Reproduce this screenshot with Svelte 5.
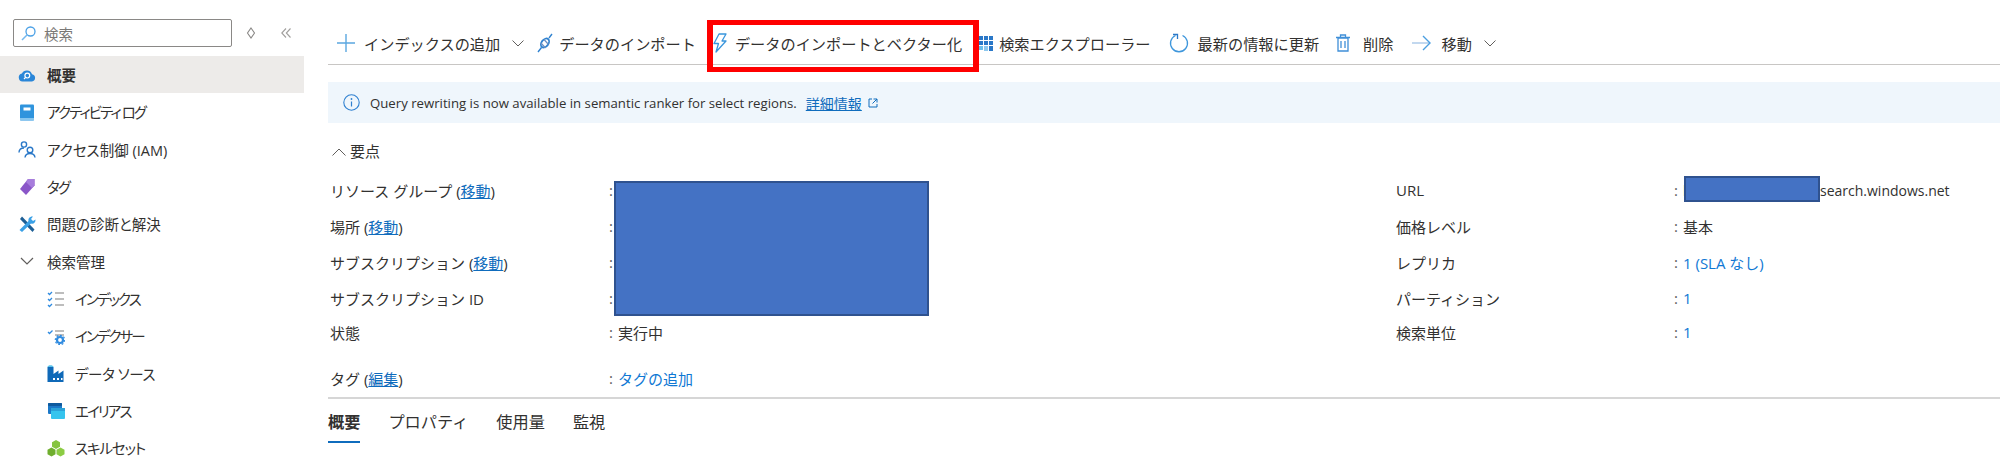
<script>
  const navItems = [
    { label: '概要', icon: 'cloud', active: true },
    { label: 'アクティビティ ログ', icon: 'book', track: 't3' },
    { label: 'アクセス制御 (IAM)', icon: 'people' },
    { label: 'タグ', icon: 'tag', track: 't3' },
    { label: '問題の診断と解決', icon: 'wrench' },
    { label: '検索管理', icon: 'chevron' },
    { label: 'インデックス', icon: 'list', sub: true, track: 't3' },
    { label: 'インデクサー', icon: 'indexer', sub: true, track: 't3' },
    { label: 'データ ソース', icon: 'factory', sub: true, track: 't1' },
    { label: 'エイリアス', icon: 'alias', sub: true, track: 't3' },
    { label: 'スキルセット', icon: 'cubes', sub: true, track: 't2' }
  ];

  const tools = [
    { label: 'インデックスの追加', icon: 'plus', menu: true },
    { label: 'データのインポート', icon: 'plug' },
    { label: 'データのインポートとベクター化', icon: 'bolt' },
    { label: '検索エクスプローラー', icon: 'grid' },
    { label: '最新の情報に更新', icon: 'refresh' },
    { label: '削除', icon: 'trash' },
    { label: '移動', icon: 'arrow', menu: true }
  ];

  const leftRows = [
    { label: 'リソース グループ', action: '移動' },
    { label: '場所', action: '移動' },
    { label: 'サブスクリプション', action: '移動' },
    { label: 'サブスクリプション ID' },
    { label: '状態', value: '実行中', short: true },
    { label: 'タグ', action: '編集', value: 'タグの追加', link: true, spaced: true }
  ];

  const rightRows = [
    { label: 'URL', value: 'search.windows.net', hidden: 'https://service-name.' },
    { label: '価格レベル', value: '基本' },
    { label: 'レプリカ', value: '1 (SLA なし)', link: true },
    { label: 'パーティション', value: '1', link: true },
    { label: '検索単位', value: '1', link: true, short: true }
  ];

  const tabs = ['概要', 'プロパティ', '使用量', '監視'];
</script>

{#snippet navIcon(name)}
  <svg class="nav-icon" viewBox="0 0 18 18" aria-hidden="true">
    {#if name === 'cloud'}
      <path d="M4.5 15.5a4 4 0 0 1-.6-7.9A5.4 5.4 0 0 1 14 8.2a3.7 3.7 0 0 1 0 7.3z" fill="#2a86d8" />
      <circle cx="9.3" cy="9.6" r="2.4" fill="none" stroke="#fff" stroke-width="1.2" />
      <path d="M7.6 11.4 6 13" stroke="#fff" stroke-width="1.2" />
    {:else if name === 'book'}
      <rect x="2" y="1.5" width="14" height="16" rx="1" fill="#2f94dd" />
      <rect x="2" y="15" width="14" height="2.5" fill="#86c6ef" />
      <rect x="5.5" y="4.5" width="7" height="3" fill="#fff" />
    {:else if name === 'people'}
      <g fill="none" stroke="#2a78c8" stroke-width="1.4">
        <circle cx="6" cy="4.5" r="2.6" />
        <path d="M1 12.5c0-3 2-4.5 5-4.5" />
        <circle cx="12" cy="10" r="2.8" />
        <path d="M7 17.5c.3-2.6 2.2-4 5-4s4.700 1.400 5 4" />
      </g>
    {:else if name === 'tag'}
      <path d="M10 1h6.500v6.500L8 17 2 11z" fill="#8a56c8" />
      <path d="M10 1h6.500v6.500L14 10 8 4z" fill="#a77ddc" />
    {:else if name === 'wrench'}
      <path d="M2 4l2-2.500L16.500 14.500l-2 2.500z" fill="#1d5f96" />
      <path d="M1.500 15l9-9c-.6-2.500 1.500-5 4.500-4.500l-2 2.500 2 2 2.500-1.500c.3 3-2 4.800-4.500 4L4 17z" fill="#3aa0e6" />
    {:else if name === 'chevron'}
      <path d="M3 6l6 6 6-6" fill="none" stroke="#605e5c" stroke-width="1.200" />
    {:else if name === 'list'}
      <g fill="none" stroke="#2f8be0" stroke-width="1.300">
        <path d="M1 3l1.500 1.500L5 2M1 9l1.500 1.500L5 8M1 15l1.500 1.500L5 14" />
      </g>
      <path d="M8 3h9M8 9h9M8 15h9" stroke="#a8a8a8" stroke-width="1.400" />
    {:else if name === 'indexer'}
      <path d="M1 5l1.500 1.500L5.500 3.500" fill="none" stroke="#2f8be0" stroke-width="1.300" />
      <path d="M8 4h9M8 8h9" stroke="#a8a8a8" stroke-width="1.300" />
      <circle cx="13" cy="13" r="3" fill="none" stroke="#2f8be0" stroke-width="2.200" />
      <circle cx="13" cy="13" r="4.700" fill="none" stroke="#2f8be0" stroke-width="1.200" stroke-dasharray="1.800 1.800" />
    {:else if name === 'factory'}
      <path d="M0.500 18V3h6v7l5-3.500V10l5-3.500V18z" fill="#0f69b8" />
      <path d="M0.500 3c0-2.500 6-2.500 6 0z" fill="#5cc3ea" />
      <path d="M6 14h2v2H6zM10 14h2v2h-2zM14 14h1.500v2H14z" fill="#fff" />
    {:else if name === 'alias'}
      <rect x="1" y="1" width="14" height="11" rx="1" fill="#1b78c8" />
      <rect x="1" y="1" width="14" height="3" rx="1" fill="#0f5a9e" />
      <rect x="4" y="6" width="14" height="11" rx="1" fill="#36c4ee" />
      <rect x="4" y="6" width="14" height="3" fill="#2ba2d8" />
    {:else if name === 'cubes'}
      <path d="M9 1l4 2.200v4.500L9 10 5 7.700V3.200z" fill="#86c440" />
      <path d="M4.500 8.500l4 2.200v4.500l-4 2.300-4-2.300v-4.500z" fill="#6fae2e" />
      <path d="M13.500 8.500l4 2.200v4.500l-4 2.300-4-2.300v-4.500z" fill="#8ccc44" />
    {/if}
  </svg>
{/snippet}

{#snippet toolIcon(name)}
  {#if name === 'plus'}
    <svg class="ti plus" viewBox="0 0 18 18" aria-hidden="true"><path d="M9 0v18M0 9h18" stroke="#5ba7e0" stroke-width="1.400" /></svg>
  {:else if name === 'plug'}
    <svg class="ti plug" viewBox="0 0 16 20" aria-hidden="true">
      <path d="M1 19l3.500-4.500M15 1l-3 4" fill="none" stroke="#2f82d0" stroke-width="1.400" />
      <ellipse cx="8" cy="10" rx="3.400" ry="5" transform="rotate(38 8 10)" fill="none" stroke="#2f82d0" stroke-width="1.800" />
      <path d="M4 10l4.500 5M7 6.500l4.500 5" stroke="#6d8fc0" stroke-width="1.200" />
    </svg>
  {:else if name === 'bolt'}
    <svg class="ti bolt" viewBox="0 0 14 20" aria-hidden="true">
      <path d="M6 1h7L9 8h4L3 19l2.500-8.500H1z" fill="none" stroke="#3a96dc" stroke-width="1.300" stroke-linejoin="round" />
    </svg>
  {:else if name === 'grid'}
    <svg class="ti grid" viewBox="0 0 14 17" aria-hidden="true">
      <path d="M5 1h4v4H5zM10 1h4v4h-4zM5 6h4v4H5zM10 6h4v4h-4zM0 1h4v4H0zM0 6h4v4H0zM10 11h4v5h-4z" fill="#2a78c8" />
      <path d="M0 11h4v4H0z" fill="#6cc0ec" />
      <path d="M5 11h4v5H5z" fill="#8cc8ee" />
    </svg>
  {:else if name === 'refresh'}
    <svg class="ti refresh" viewBox="0 0 20 20" aria-hidden="true">
      <path d="M6.500 2.500a8.500 8.500 0 1 0 7 0" fill="none" stroke="#3f97dc" stroke-width="1.300" />
      <path d="M4 1.500h4.500V6" fill="none" stroke="#2a78c8" stroke-width="1.300" />
    </svg>
  {:else if name === 'trash'}
    <svg class="ti trash" viewBox="0 0 14 18" aria-hidden="true">
      <path d="M2 4h10v13H2zM0 3.500h14M4.500 3.500V1h5v2.500M5 7v7M9 7v7" fill="none" stroke="#3f8fd8" stroke-width="1.300" />
    </svg>
  {:else if name === 'arrow'}
    <svg class="ti arrow" viewBox="0 0 19 16" aria-hidden="true">
      <path d="M0 8h18" stroke="#a8c8e8" stroke-width="1.400" />
      <path d="M11 1l7 7-7 7" fill="none" stroke="#4a9ee0" stroke-width="1.400" />
    </svg>
  {/if}
{/snippet}

<div class="page">
  <aside class="sidebar">
    <div class="search-row">
      <div class="search-box">
        <svg class="search-icon" viewBox="0 0 15 15" aria-hidden="true">
          <circle cx="9.500" cy="5.500" r="4.500" fill="none" stroke="#4aa0e6" stroke-width="1.300" />
          <path d="M6.200 8.800 1 14" stroke="#74b8ee" stroke-width="1.500" />
        </svg>
        <span>検索</span>
      </div>
      <svg class="sort-icon" viewBox="0 0 10 12" aria-hidden="true">
        <path d="M5 1l3.500 5L5 11 1.500 6z" fill="none" stroke="#8a8886" stroke-width="1.100" />
      </svg>
      <svg class="collapse-icon" viewBox="0 0 10 10" aria-hidden="true">
        <path d="M5 .5.800 5 5 9.500M9.500.5 5.300 5l4.200 4.500" fill="none" stroke="#a19f9d" stroke-width="1.100" />
      </svg>
    </div>
    <nav>
      {#each navItems as item}
        <div class="nav-row" class:active={item.active} class:sub={item.sub}>
          {@render navIcon(item.icon)}
          <span class={item.track}>{item.label}</span>
        </div>
      {/each}
    </nav>
  </aside>

  <main>
    <div class="toolbar">
      {#each tools as tool}
        <div class="tool">
          {@render toolIcon(tool.icon)}
          <span>{tool.label}</span>
          {#if tool.menu}
            <svg class="caret" viewBox="0 0 12 7" aria-hidden="true"><path d="M.5.500 6 6 11.500.500" fill="none" stroke="#605e5c" stroke-width="1" /></svg>
          {/if}
        </div>
      {/each}
      <div class="highlight"></div>
    </div>

    <div class="banner">
      <svg class="info" viewBox="0 0 17 17" aria-hidden="true">
        <circle cx="8.500" cy="8.500" r="7.700" fill="none" stroke="#2f80d0" stroke-width="1.100" />
        <path d="M8.500 7.500v5" stroke="#2f80d0" stroke-width="1.200" />
        <circle cx="8.500" cy="5" r=".9" fill="#2f80d0" />
      </svg>
      <span class="banner-text">Query rewriting is now available in semantic ranker for select regions.</span>
      <span class="banner-link"><span class="banner-link-text">詳細情報</span>
        <svg class="external" viewBox="0 0 10 10" aria-hidden="true"><path d="M4 1H1v8h8V6M5.500 1H9v3.500M9 1 4.500 5.500" fill="none" stroke="#0f6cbd" stroke-width="1" /></svg>
      </span>
    </div>

    <div class="essentials-head">
      <svg viewBox="0 0 14 8" aria-hidden="true"><path d="M.5 7.500 7 1l6.500 6.500" fill="none" stroke="#605e5c" stroke-width="1" /></svg>
      <span>要点</span>
    </div>

    <div class="essentials">
      <div class="col left-col">
        {#each leftRows as row}
          <div class="row" class:short={row.short} class:spaced={row.spaced}>
            <span class="label">{row.label}{#if row.action}&nbsp;(<span class="inline-link">{row.action}</span>){/if}</span>
            <span class="colon">:</span>
            <span class="value" class:link={row.link}>{row.value ?? ''}</span>
          </div>
        {/each}
        <div class="mask big-mask"></div>
      </div>
      <div class="col right-col">
        {#each rightRows as row}
          <div class="row" class:short={row.short}>
            <span class="label">{row.label}</span>
            <span class="colon">:</span>
            {#if row.hidden}<span class="url-hidden">{row.hidden}</span>{/if}
            <span class="value" class:link={row.link} class:url={row.hidden}>{row.value}</span>
          </div>
        {/each}
        <div class="mask url-mask"></div>
      </div>
    </div>

    <div class="tabs">
      {#each tabs as tab, i}
        <div class="tab" class:current={i === 0}>{tab}</div>
      {/each}
    </div>
  </main>
</div>

<style>
  :global(body) {
    margin: 0;
    background: #fff;
  }

  .page {
    display: flex;
    height: 469px;
    overflow: hidden;
    color: #323130;
    font-family: "Open Sans", "Noto Sans CJK JP", sans-serif;
  }

  .sidebar {
    flex: 0 0 304px;
    padding-top: 19px;
    font-feature-settings: "palt";
  }

  .search-row {
    display: flex;
    align-items: center;
    height: 28px;
    margin-bottom: 9px;
    padding-left: 13px;
  }

  .search-box {
    display: flex;
    align-items: center;
    box-sizing: border-box;
    width: 219px;
    height: 28px;
    padding-left: 7px;
    gap: 8px;
    border: 1px solid #8a8886;
    border-radius: 2px;
    font-size: 14.500px;
    color: #7a7876;
  }

  .search-icon {
    width: 15px;
    height: 15px;
  }

  .sort-icon {
    width: 10px;
    height: 12px;
    margin-left: 14px;
  }

  .collapse-icon {
    width: 10px;
    height: 10px;
    margin-left: 25px;
  }

  .nav-row {
    display: flex;
    align-items: center;
    height: 37.33px;
    padding-left: 18px;
    gap: 11px;
    font-size: 14.500px;
  }

  .nav-row.active {
    background: #edebe9;
    font-weight: 600;
  }

  .nav-row.sub {
    padding-left: 47px;
    gap: 10px;
  }

  .t1 { letter-spacing: -0.4px; }
  .t2 { letter-spacing: -1.1px; }
  .t3 { letter-spacing: -1.9px; }

  .nav-icon {
    width: 18px;
    height: 18px;
    flex: none;
  }

  main {
    flex: 1;
    min-width: 0;
    margin-left: 24px;
  }

  .toolbar {
    position: relative;
    display: flex;
    align-items: center;
    box-sizing: border-box;
    height: 65px;
    padding: 22px 0 0 9px;
    gap: 17px;
    border-bottom: 1px solid #c8c6c4;
    font-size: 15.200px;
    white-space: nowrap;
  }

  .tool {
    display: flex;
    align-items: center;
    flex: none;
  }

  .ti {
    flex: none;
  }

  .plus { width: 18px; height: 18px; margin-right: 9px; }
  .plug { width: 16px; height: 20px; margin: 0 6px 0 -4px; }
  .bolt { width: 14px; height: 20px; margin-right: 8px; }
  .grid { width: 14px; height: 17px; margin-right: 6px; }
  .refresh { width: 20px; height: 20px; margin: 0 9px 0 1px; }
  .trash { width: 14px; height: 18px; margin-right: 13px; }
  .arrow { width: 19px; height: 16px; margin: 0 10px 0 2px; }

  .caret {
    width: 12px;
    height: 7px;
    margin-left: 12px;
  }

  /* the red annotation drawn over the screenshot */
  .highlight {
    position: absolute;
    left: 379px;
    top: 20px;
    width: 272px;
    height: 52px;
    box-sizing: border-box;
    border: solid #f00;
    border-width: 5px 6px;
  }

  .banner {
    display: flex;
    align-items: center;
    height: 41px;
    margin-top: 17px;
    padding-left: 15px;
    background: #eff6fc;
    font-size: 13.200px;
  }

  .info {
    width: 17px;
    height: 17px;
    margin-right: 10px;
  }

  .banner-link {
    display: inline-flex;
    align-items: center;
    gap: 6px;
    margin-left: 9px;
    font-size: 14px;
    color: #0f6cbd;
  }

  .banner-link-text {
    text-decoration: underline;
  }

  .external {
    width: 10px;
    height: 10px;
  }

  .essentials-head {
    display: flex;
    align-items: center;
    gap: 4px;
    height: 20px;
    margin: 17px 0 13px 4px;
    font-size: 15px;
  }

  .essentials-head svg {
    width: 14px;
    height: 8px;
    margin-top: 3px;
  }

  .essentials {
    display: flex;
    height: 224px;
    font-size: 15px;
  }

  .col {
    position: relative;
  }

  .left-col {
    flex: 0 0 1066px;
    padding-left: 2px;
  }

  .right-col {
    flex: 1;
    min-width: 0;
  }

  .row {
    display: flex;
    align-items: center;
    box-sizing: border-box;
    height: 36px;
    padding-bottom: 2px;
    white-space: nowrap;
  }

  .row.short {
    height: 32px;
  }

  .row.spaced {
    margin-top: 12px;
  }

  .left-col .label {
    flex: 0 0 279px;
  }

  .right-col .label {
    flex: 0 0 278px;
  }

  .colon {
    flex: 0 0 9px;
    color: #605e5c;
  }

  .value.link {
    color: #0f78d4;
  }

  .value.url {
    font-size: 14px;
  }

  .url-hidden {
    flex: 0 0 137px;
    overflow: hidden;
    font-size: 14px;
  }

  .inline-link {
    color: #0f6cbd;
    text-decoration: underline;
  }

  /* redaction rectangles pasted over the screenshot */
  .mask {
    position: absolute;
    box-sizing: border-box;
    background: #4472c4;
    border: 2px solid #2f528f;
  }

  .big-mask {
    left: 286px;
    top: 8px;
    width: 315px;
    height: 135px;
  }

  .url-mask {
    left: 288px;
    top: 3px;
    width: 136px;
    height: 26px;
  }

  .tabs {
    display: flex;
    gap: 28px;
    border-top: 2px solid #d6d6d6;
    font-size: 16.200px;
  }

  .tab {
    padding: 12px 0 8px;
    line-height: 22px;
    border-bottom: 2px solid transparent;
  }

  .tab.current {
    font-weight: 600;
    border-bottom-color: #0f6cbd;
  }
</style>
